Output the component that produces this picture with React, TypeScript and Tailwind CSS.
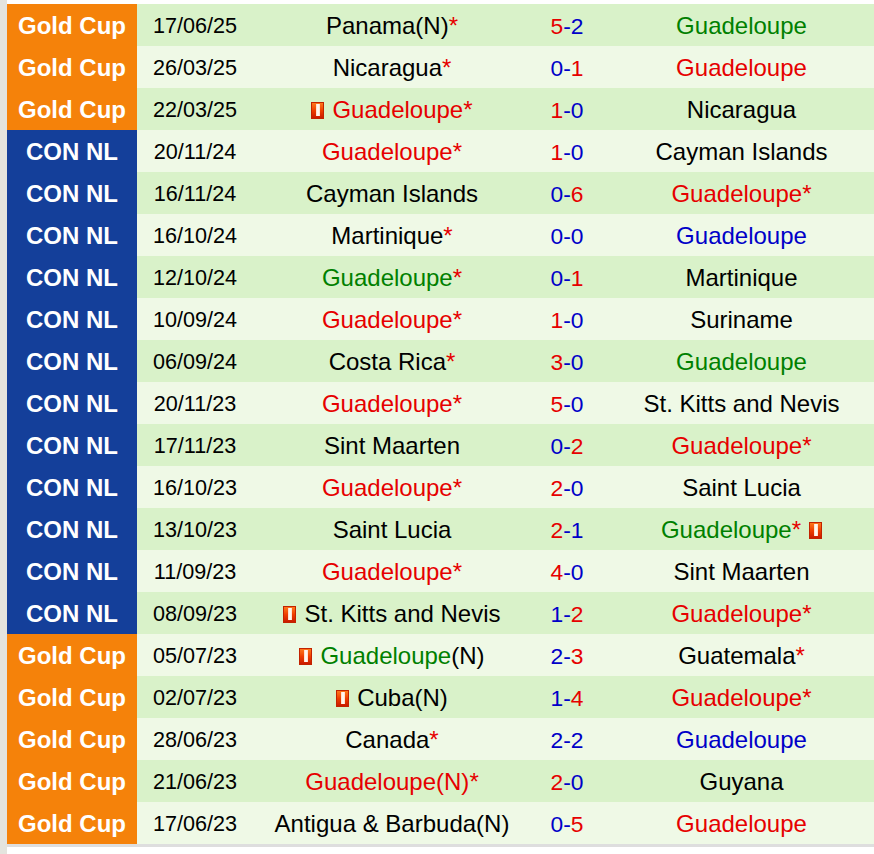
import React from 'react'

type Part = { t: string; c?: 'red' | 'green' | 'blue' | 'black' }

type Match = {
  comp: 'gold' | 'con'
  date: string
  home: Part[]
  homeCard?: boolean
  score: [number, number]
  away: Part[]
  awayCard?: boolean
}

const colorClass = {
  red: 'text-[#e60000]',
  green: 'text-[#008000]',
  blue: 'text-[#0000c8]',
  black: 'text-black',
}

const star: Part = { t: '*', c: 'red' }
const G = (c: Part['c']): Part => ({ t: 'Guadeloupe', c })
const T = (t: string): Part => ({ t, c: 'black' })

const matches: Match[] = [
  { comp: 'gold', date: '17/06/25', home: [T('Panama(N)'), star], score: [5, 2], away: [G('green')] },
  { comp: 'gold', date: '26/03/25', home: [T('Nicaragua'), star], score: [0, 1], away: [G('red')] },
  { comp: 'gold', date: '22/03/25', home: [G('red'), star], homeCard: true, score: [1, 0], away: [T('Nicaragua')] },
  { comp: 'con', date: '20/11/24', home: [G('red'), star], score: [1, 0], away: [T('Cayman Islands')] },
  { comp: 'con', date: '16/11/24', home: [T('Cayman Islands')], score: [0, 6], away: [G('red'), star] },
  { comp: 'con', date: '16/10/24', home: [T('Martinique'), star], score: [0, 0], away: [G('blue')] },
  { comp: 'con', date: '12/10/24', home: [G('green'), star], score: [0, 1], away: [T('Martinique')] },
  { comp: 'con', date: '10/09/24', home: [G('red'), star], score: [1, 0], away: [T('Suriname')] },
  { comp: 'con', date: '06/09/24', home: [T('Costa Rica'), star], score: [3, 0], away: [G('green')] },
  { comp: 'con', date: '20/11/23', home: [G('red'), star], score: [5, 0], away: [T('St. Kitts and Nevis')] },
  { comp: 'con', date: '17/11/23', home: [T('Sint Maarten')], score: [0, 2], away: [G('red'), star] },
  { comp: 'con', date: '16/10/23', home: [G('red'), star], score: [2, 0], away: [T('Saint Lucia')] },
  { comp: 'con', date: '13/10/23', home: [T('Saint Lucia')], score: [2, 1], away: [G('green'), star], awayCard: true },
  { comp: 'con', date: '11/09/23', home: [G('red'), star], score: [4, 0], away: [T('Sint Maarten')] },
  { comp: 'con', date: '08/09/23', home: [T('St. Kitts and Nevis')], homeCard: true, score: [1, 2], away: [G('red'), star] },
  { comp: 'gold', date: '05/07/23', home: [G('green'), T('(N)')], homeCard: true, score: [2, 3], away: [T('Guatemala'), star] },
  { comp: 'gold', date: '02/07/23', home: [T('Cuba(N)')], homeCard: true, score: [1, 4], away: [G('red'), star] },
  { comp: 'gold', date: '28/06/23', home: [T('Canada'), star], score: [2, 2], away: [G('blue')] },
  { comp: 'gold', date: '21/06/23', home: [{ t: 'Guadeloupe(N)', c: 'red' }, star], score: [2, 0], away: [T('Guyana')] },
  { comp: 'gold', date: '17/06/23', home: [T('Antigua & Barbuda(N)')], score: [0, 5], away: [G('red')] },
]

function RedCard() {
  return (
    <span className="inline-flex h-[17px] w-[13px] shrink-0 items-center justify-center bg-gradient-to-b from-[#ff7d1e] via-[#ef3d00] to-[#c41200] shadow-[inset_0_0_0_1px_#c22200]">
      <span className="h-[12px] w-[4px] bg-gradient-to-r from-[#ffd9c0] via-white to-[#ffd9c0]" />
    </span>
  )
}

function Team({ parts, cardBefore, cardAfter }: { parts: Part[]; cardBefore?: boolean; cardAfter?: boolean }) {
  return (
    <div className="flex items-center justify-center gap-[8px]">
      {cardBefore && <RedCard />}
      <span>
        {parts.map((p, i) => (
          <span key={i} className={colorClass[p.c || 'black']}>{p.t}</span>
        ))}
      </span>
      {cardAfter && <RedCard />}
    </div>
  )
}

export default function App() {
  return (
    <div className="flex h-[854px] w-[874px] overflow-hidden bg-white font-['Liberation_Sans',Arial,sans-serif]">
      {/* left strip */}
      <div className="w-[7px] shrink-0 bg-[#e4e4de]" />

      <div className="pt-[4px]">
        <div className="w-[873px] border-b-[3px] border-[#dedede]">
          {matches.map((m, i) => {
            const [h, a] = m.score
            return (
              <div
                key={i}
                className={`grid h-[42px] grid-cols-[130px_116px_278px_72px_277px] items-stretch ${
                  i % 2 === 0 ? 'bg-[#d9f2c9]' : 'bg-[#eff9e6]'
                }`}
              >
                <div
                  className={`flex items-center justify-center pt-[2px] text-[24px] font-bold text-white ${
                    m.comp === 'gold' ? 'bg-[#f5820a]' : 'bg-[#143f9a]'
                  }`}
                >
                  {m.comp === 'gold' ? 'Gold Cup' : 'CON NL'}
                </div>
                <div className="flex items-center justify-center pt-[2px] text-[21.6px] text-black">{m.date}</div>
                <div className="flex items-center justify-center pt-[2px] text-[24px]">
                  <Team parts={m.home} cardBefore={m.homeCard} />
                </div>
                <div className="flex items-center justify-center pt-[2px] text-[22.8px]">
                  <span className={h > a ? 'text-[#e60000]' : 'text-[#0000c8]'}>{h}</span>
                  <span className="text-[#0000c8]">-</span>
                  <span className={a > h ? 'text-[#e60000]' : 'text-[#0000c8]'}>{a}</span>
                </div>
                <div className="flex items-center justify-center pt-[2px] text-[24px]">
                  <Team parts={m.away} cardAfter={m.awayCard} />
                </div>
              </div>
            )
          })}
        </div>
      </div>
    </div>
  )
}
